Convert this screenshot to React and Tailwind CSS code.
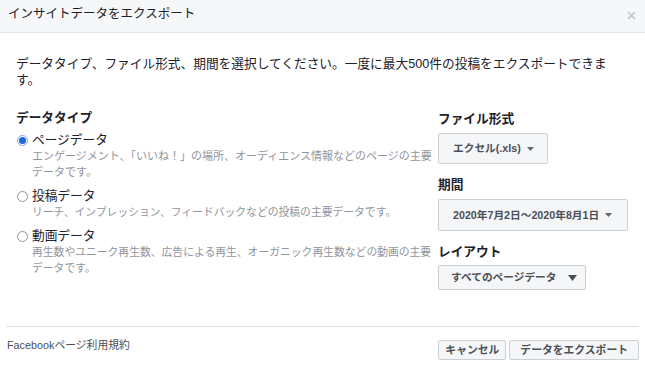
import React from 'react';

const font = { fontFamily: '"Liberation Sans", "Noto Sans CJK JP", sans-serif' };

function Caret({ big }) {
  return big ? (
    <svg width="9" height="6" viewBox="0 0 9 6" className="ml-[11px]">
      <path d="M0 0h9L4.5 6z" fill="#4b4f56" />
    </svg>
  ) : (
    <svg width="7" height="4" viewBox="0 0 7 4" className="ml-[6px]">
      <path d="M0 0h7L3.5 4z" fill="#606770" />
    </svg>
  );
}

function Radio({ checked, label, lines, size = 'text-[10.8px]' }) {
  return (
    <div className="flex flex-col">
      <div className="flex items-center h-4">
        {checked ? (
          <span className="w-[11px] h-[11px] rounded-full border border-[#7fa6f0] bg-white flex items-center justify-center ml-[1px]">
            <span className="w-[7px] h-[7px] rounded-full bg-[#1f63e0]"></span>
          </span>
        ) : (
          <span className="w-[11px] h-[11px] rounded-full border border-[#8d949e] bg-white ml-[1px]"></span>
        )}
        <span className="ml-[4px] text-[12.7px] leading-4 text-[#1d2129]">{label}</span>
      </div>
      {lines.map((l) => (
        <p key={l} className={`pl-[16px] leading-4 text-[#90949c] whitespace-nowrap ${size}`}>
          {l}
        </p>
      ))}
    </div>
  );
}

function Select({ children, h, big, pl, pr }) {
  return (
    <div
      className={`self-start flex items-center bg-[#f5f6f7] border border-[#ccd0d5] rounded-[2px] text-[10.7px] font-bold text-[#4b4f56] ${h} ${pl} ${pr}`}
    >
      <span>{children}</span>
      <Caret big={big} />
    </div>
  );
}

export default function App() {
  return (
    <div className="w-[645px] h-[367px] bg-white flex flex-col overflow-hidden" style={font}>
      <div className="h-[33px] bg-[#f6f7f9] border-b border-[#e5e5e5] flex items-center justify-between pl-[8px] pr-[9px]">
        <span className="text-[12.5px] text-[#1d2129] -mt-[4px]">インサイトデータをエクスポート</span>
        <svg width="9" height="9" viewBox="0 0 9 9" className="-mt-[1px]">
          <path d="M1 1l7 7M8 1L1 8" stroke="#bec2c9" strokeWidth="1.6" />
        </svg>
      </div>

      <div className="mt-[23px] ml-[16px] flex flex-col text-[12.7px] leading-4 text-[#1d2129]">
        <p className="whitespace-nowrap">データタイプ、ファイル形式、期間を選択してください。一度に最大500件の投稿をエクスポートできま</p>
        <p>す。</p>
      </div>

      <div className="flex mt-[22px] pl-[16px]">
        <div className="w-[422px] flex flex-col">
          <h3 className="text-[12.7px] leading-4 font-bold text-[#1d2129]">データタイプ</h3>
          <div className="mt-[6px] flex flex-col gap-[8px]">
            <Radio
              checked
              size="text-[11px]"
              label="ページデータ"
              lines={[
                'エンゲージメント、「いいね！」の場所、オーディエンス情報などのページの主要',
                'データです。',
              ]}
            />
            <Radio
              label="投稿データ"
              lines={['リーチ、インプレッション、フィードバックなどの投稿の主要データです。']}
            />
            <Radio
              label="動画データ"
              lines={[
                '再生数やユニーク再生数、広告による再生、オーガニック再生数などの動画の主要',
                'データです。',
              ]}
            />
          </div>
        </div>

        <div className="flex flex-col pt-[1px]">
          <h3 className="text-[12.7px] leading-4 font-bold text-[#1d2129]">ファイル形式</h3>
          <div className="mt-[6px] flex">
            <Select h="h-[31px]" pl="pl-[14px]" pr="pr-[13px]">エクセル(.xls)</Select>
          </div>
          <h3 className="mt-[13px] text-[12.7px] leading-4 font-bold text-[#1d2129]">期間</h3>
          <div className="mt-[6px] flex">
            <Select h="h-[32px]" pl="pl-[14px]" pr="pr-[15px]">2020年7月2日～2020年8月1日</Select>
          </div>
          <h3 className="mt-[13px] text-[12.7px] leading-4 font-bold text-[#1d2129]">レイアウト</h3>
          <div className="mt-[5px] flex">
            <Select h="h-[25px]" big pl="pl-[12px]" pr="pr-[8px]">すべてのページデータ</Select>
          </div>
        </div>
      </div>

      <div className="mt-auto mx-[6px] h-[41px] border-t border-[#dddfe2] flex justify-between items-start">
        <span className="mt-[11px] pl-[1px] text-[10.8px] leading-[14px] text-[#4b4f56]">Facebookページ利用規約</span>
        <div className="mt-[13px] flex gap-[3px]">
          <button className="h-[20px] px-[6px] bg-[#f5f6f7] border border-[#ccd0d5] rounded-[2px] text-[10.8px] font-bold text-[#4b4f56] flex items-center">
            キャンセル
          </button>
          <button className="h-[20px] px-[10px] bg-[#f5f6f7] border border-[#ccd0d5] rounded-[2px] text-[10.8px] font-bold text-[#4b4f56] flex items-center">
            データをエクスポート
          </button>
        </div>
      </div>
    </div>
  );
}
